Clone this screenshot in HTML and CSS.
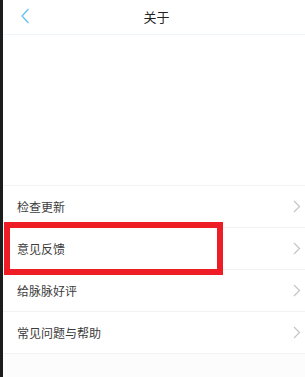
FILE: index.html
```html
<!DOCTYPE html>
<html lang="zh-CN">
<head>
<meta charset="UTF-8" />
<meta name="viewport" content="width=device-width, initial-scale=1.0"/>
<title>关于</title>
<link rel="stylesheet" href="styles.css">
</head>
<body>
    <div class="page">
        <!-- Header -->
        <div class="header">
            <svg class="back" width="10" height="16" viewBox="0 0 10 16">
                <polyline points="8.5,1 2,8 8.5,15" fill="none" stroke="#62c2ee" stroke-width="1.3"/>
            </svg>
            <div class="title">关于</div>
        </div>

        <div class="intro"></div>

        <div class="menu">
            <div class="menu-item">
                <span>检查更新</span>
                <svg class="arrow" width="8" height="13" viewBox="0 0 8 13"><polyline points="1,1 6.5,6.5 1,12" fill="none" stroke="#c4c4c4" stroke-width="1.2"/></svg>
            </div>
            <div class="menu-item">
                <div class="highlight"></div>
                <span>意见反馈</span>
                <svg class="arrow" width="8" height="13" viewBox="0 0 8 13"><polyline points="1,1 6.5,6.5 1,12" fill="none" stroke="#c4c4c4" stroke-width="1.2"/></svg>
            </div>
            <div class="menu-item">
                <span>给脉脉好评</span>
                <svg class="arrow" width="8" height="13" viewBox="0 0 8 13"><polyline points="1,1 6.5,6.5 1,12" fill="none" stroke="#c4c4c4" stroke-width="1.2"/></svg>
            </div>
            <div class="menu-item">
                <span>常见问题与帮助</span>
                <svg class="arrow" width="8" height="13" viewBox="0 0 8 13"><polyline points="1,1 6.5,6.5 1,12" fill="none" stroke="#c4c4c4" stroke-width="1.2"/></svg>
            </div>
        </div>
    </div>
</body>
</html>
```

FILE: styles.css
```css
html, body {
    margin: 0;
    padding: 0;
    height: 100%;
    overflow: hidden;
}

body {
    font-family: "Noto Sans CJK SC", "Noto Sans", sans-serif;
    background: #fcfcfc;
    border-left: 3px solid #1c1c1c;
    box-sizing: border-box;
}

.page {
    display: flex;
    flex-direction: column;
}

.header {
    height: 34px;
    background: #fff;
    border-bottom: 1px solid #eef6fa;
    display: flex;
    align-items: center;
    justify-content: center;
    position: relative;
}

.back {
    position: absolute;
    left: 17px;
    top: 8px;
}

.title {
    font-size: 13px;
    color: #222;
    margin-left: 5px;
    margin-top: -1px;
}

.intro {
    height: 150px;
    background: #fff;
}

.menu {
    border-top: 1px solid #f2f2f2;
    background: #fff;
}

.menu-item {
    height: 41px;
    border-bottom: 1px solid #f2f2f2;
    display: flex;
    align-items: center;
    justify-content: space-between;
    padding: 0 4px 0 14px;
    position: relative;
}

.menu-item span {
    font-size: 12px;
    color: #3c3c3c;
}

.highlight {
    position: absolute;
    top: -6px;
    left: 1px;
    width: 207px;
    height: 41px;
    border: 6px solid #ee1c24;
}
```
